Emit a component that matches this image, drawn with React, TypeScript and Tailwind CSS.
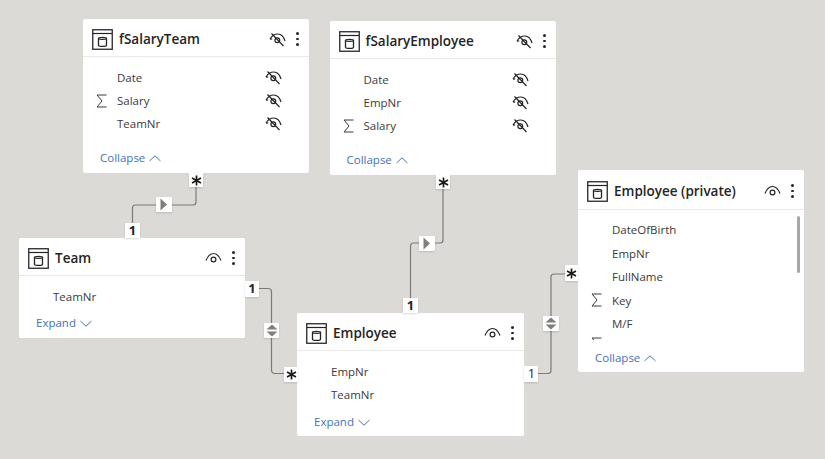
import type { ReactNode } from 'react';

const font = 'font-["Open_Sans",sans-serif]';

function TableIcon() {
    return (
        <svg width="21" height="21" viewBox="0 0 21 21" fill="none" stroke="#252423" className="shrink-0">
            <rect x="0.75" y="0.75" width="19.5" height="19.5" stroke="#2b2526" strokeWidth="1.3" />
            <path d="M1 4.5H20" strokeWidth="1.2" />
            <path d="M6.5 9.2c0-1.2 8-1.2 8 0v7c0 1.6-8 1.6-8 0z" strokeWidth="1.3" />
            <path d="M6.5 9.6c1 1.2 7 1.2 8 0" strokeWidth="1.1" />
        </svg>
    );
}

function EyeIcon() {
    return (
        <svg width="17" height="12" viewBox="0 0 17 12" fill="none" stroke="#252423" strokeWidth="1.2">
            <path d="M1 8.5C3 3.5 6 1.5 8.5 1.5S14 3.5 16 8.5" />
            <circle cx="8.5" cy="7.5" r="2.4" />
        </svg>
    );
}

function EyeOffIcon() {
    return (
        <svg width="17" height="15" viewBox="0 0 17 15" fill="none" stroke="#252423" strokeWidth="1.2">
            <path d="M1 7C3 3.5 6 2 8.8 2S14.5 4 16 9" />
            <path d="M1 7l2.2 0" />
            <circle cx="8.3" cy="8.3" r="2.4" />
            <path d="M2.5 1.5L14.5 14" />
        </svg>
    );
}

function MoreIcon() {
    return (
        <div className="flex flex-col gap-[3px] w-[3px]">
            <div className="size-[2.5px] rounded-full bg-[#252423]" />
            <div className="size-[2.5px] rounded-full bg-[#252423]" />
            <div className="size-[2.5px] rounded-full bg-[#252423]" />
        </div>
    );
}

function Sigma() {
    return (
        <svg width="11" height="14" viewBox="0 0 11 14" fill="none" stroke="#3b3a39" strokeWidth="1">
            <path d="M10.5 1H1L6 7 1 13h9.5" />
        </svg>
    );
}

function Chevron({ up }: { up?: boolean }) {
    return (
        <svg width="12" height="7" viewBox="0 0 12 7" fill="none" stroke="#4472b8" strokeWidth="1">
            <path d={up ? 'M0.5 6L6 0.8 11.5 6' : 'M0.5 1L6 6.2 11.5 1'} />
        </svg>
    );
}

type Field = { name: string; sum?: boolean; hidden?: boolean };

function Row({ f, tall }: { f: Field; tall?: boolean }) {
    return (
        <div className={`flex items-center shrink-0 ${tall ? 'h-[23.5px]' : 'h-[23px]'}`}>
            <div className="w-[34px] pl-[13px] flex items-center shrink-0">{f.sum && <Sigma />}</div>
            <span className="text-[11.5px] text-[#3b3a39] grow">{f.name}</span>
            {f.hidden && (
                <div className="mr-[27px]">
                    <EyeOffIcon />
                </div>
            )}
        </div>
    );
}

function Card({
    title,
    className,
    fields,
    hidden,
    footer,
    up,
    headerH = 'h-[38px]',
    footerPb = 'pb-[7px]',
    children,
}: {
    title: string;
    className: string;
    fields: Field[];
    hidden?: boolean;
    footer: string;
    up?: boolean;
    headerH?: string;
    footerPb?: string;
    children?: ReactNode;
}) {
    return (
        <div className={`absolute flex flex-col bg-white rounded-[2px] ${className}`}>
            <div className={`flex items-center pt-[3px] pl-[9px] pr-[10px] gap-[6px] border-b border-[#eae9e7] shrink-0 ${headerH}`}>
                <TableIcon />
                <span className="text-[13.5px] font-semibold text-[#252423] grow">{title}</span>
                <div className="mr-[4px]">{hidden ? <EyeOffIcon /> : <EyeIcon />}</div>
                <MoreIcon />
            </div>
            {children ?? (
                <div className="flex flex-col pt-[9px]">
                    {fields.map((f) => (
                        <Row key={f.name} f={f} />
                    ))}
                </div>
            )}
            <div className={`mt-auto flex items-center gap-[4px] pl-[17px] text-[11.5px] leading-[16px] text-[#4472b8] ${footerPb}`}>
                {footer}
                <Chevron up={up} />
            </div>
        </div>
    );
}

function Badge({ className, children }: { className: string; children: ReactNode }) {
    return (
        <div className={`absolute flex items-center justify-center bg-white font-bold text-[13px] text-[#252423] shadow-[0_1px_2px_rgba(0,0,0,0.15)] ${className}`}>
            {children}
        </div>
    );
}

function Star() {
    return (
        <svg width="11" height="11" viewBox="0 0 11 11" stroke="#1b1a19" strokeWidth="1.7">
            <path d="M5.5 0.5V10.5M1 3L10 8M10 3L1 8" />
        </svg>
    );
}

function ArrowBox({ className, both }: { className: string; both?: boolean }) {
    return (
        <div className={`absolute flex items-center justify-center rounded-[1px] bg-white shadow-[0_1px_2px_rgba(0,0,0,0.15)] ${className}`}>
            <svg width="12" height="13" viewBox="0 0 12 13" fill="#7f7e7a">
                {both ? <path d="M6 0.5L11.5 5.5H0.5zM0.5 7.5H11.5L6 12.5z" /> : <path d="M2.5 0.5L9 6.5 2.5 12.5z" />}
            </svg>
        </div>
    );
}

export default function App() {
    return (
        <div className={`relative w-[825px] h-[459px] overflow-hidden bg-[#dbdad6] ${font}`}>
            <svg className="absolute inset-0" width="825" height="459" fill="none" stroke="#7c7b77" strokeWidth="1.2">
                <path d="M196 186V202Q196 205 193 205H135.500Q132.500 205 132.500 208V224" />
                <path d="M443 188V240Q443 243 440 243H413.500Q410.500 243 410.500 246V299" />
                <path d="M258 288.500H268Q271.500 288.500 271.500 292V370Q271.500 373.500 275 373.500H285" />
                <path d="M537 373.500H548Q551 373.500 551 370.500V277Q551 274 554 274H566" />
            </svg>

            <Card
                title="fSalaryTeam"
                className="left-[83px] top-[19px] w-[226px] h-[154px]"
                hidden
                footer="Collapse"
                up
                fields={[
                    { name: 'Date', hidden: true },
                    { name: 'Salary', sum: true, hidden: true },
                    { name: 'TeamNr', hidden: true },
                ]}
            />
            <Card
                title="fSalaryEmployee"
                className="left-[329.5px] top-[21px] w-[226.5px] h-[154px]"
                hidden
                footer="Collapse"
                up
                fields={[
                    { name: 'Date', hidden: true },
                    { name: 'EmpNr', hidden: true },
                    { name: 'Salary', sum: true, hidden: true },
                ]}
            />
            <Card
                title="Employee (private)"
                className="left-[578px] top-[170px] w-[226px] h-[202px]"
                headerH="h-[40px]"
                footerPb="pb-[6px]"
                footer="Collapse"
                up
                fields={[]}
            >
                <div className="relative flex flex-col pt-[8px] h-[130px] overflow-hidden">
                    <Row tall f={{ name: 'DateOfBirth' }} />
                    <Row tall f={{ name: 'EmpNr' }} />
                    <Row tall f={{ name: 'FullName' }} />
                    <Row tall f={{ name: 'Key', sum: true }} />
                    <Row tall f={{ name: 'M/F' }} />
                    <div className="-mt-[3px]">
                        <Row tall f={{ name: '', sum: true }} />
                    </div>
                    <div className="absolute right-[4px] top-[6px] w-[3px] h-[57px] rounded-full bg-[#a8a7a5]" />
                </div>
            </Card>
            <Card
                title="Team"
                className="left-[19px] top-[238px] w-[226px] h-[100px]"
                footer="Expand"
                fields={[{ name: 'TeamNr' }]}
            />
            <Card
                title="Employee"
                className="left-[297px] top-[313px] w-[227px] h-[123px]"
                footerPb="pb-[6px]"
                footer="Expand"
                fields={[{ name: 'EmpNr' }, { name: 'TeamNr' }]}
            />

            <Badge className="left-[189px] top-[173px] w-[14px] h-[14px]"><Star /></Badge>
            <Badge className="left-[125px] top-[223px] w-[15px] h-[15px]">1</Badge>
            <ArrowBox className="left-[156px] top-[197px] w-[16px] h-[15px]" />

            <Badge className="left-[436px] top-[175px] w-[14px] h-[14px]"><Star /></Badge>
            <Badge className="left-[403px] top-[298px] w-[15px] h-[15px]">1</Badge>
            <ArrowBox className="left-[419px] top-[236px] w-[16px] h-[15px]" />

            <Badge className="left-[245px] top-[281px] w-[14px] h-[16px]">1</Badge>
            <Badge className="left-[284px] top-[367px] w-[14px] h-[15px]"><Star /></Badge>
            <ArrowBox className="left-[264px] top-[323px] w-[15px] h-[15px]" both />

            <Badge className="left-[524px] top-[366px] w-[14px] h-[16px] pl-[1px] font-normal">1</Badge>
            <Badge className="left-[565px] top-[265px] w-[13px] h-[16px]"><Star /></Badge>
            <ArrowBox className="left-[543px] top-[316px] w-[16px] h-[15px]" both />
        </div>
    );
}
